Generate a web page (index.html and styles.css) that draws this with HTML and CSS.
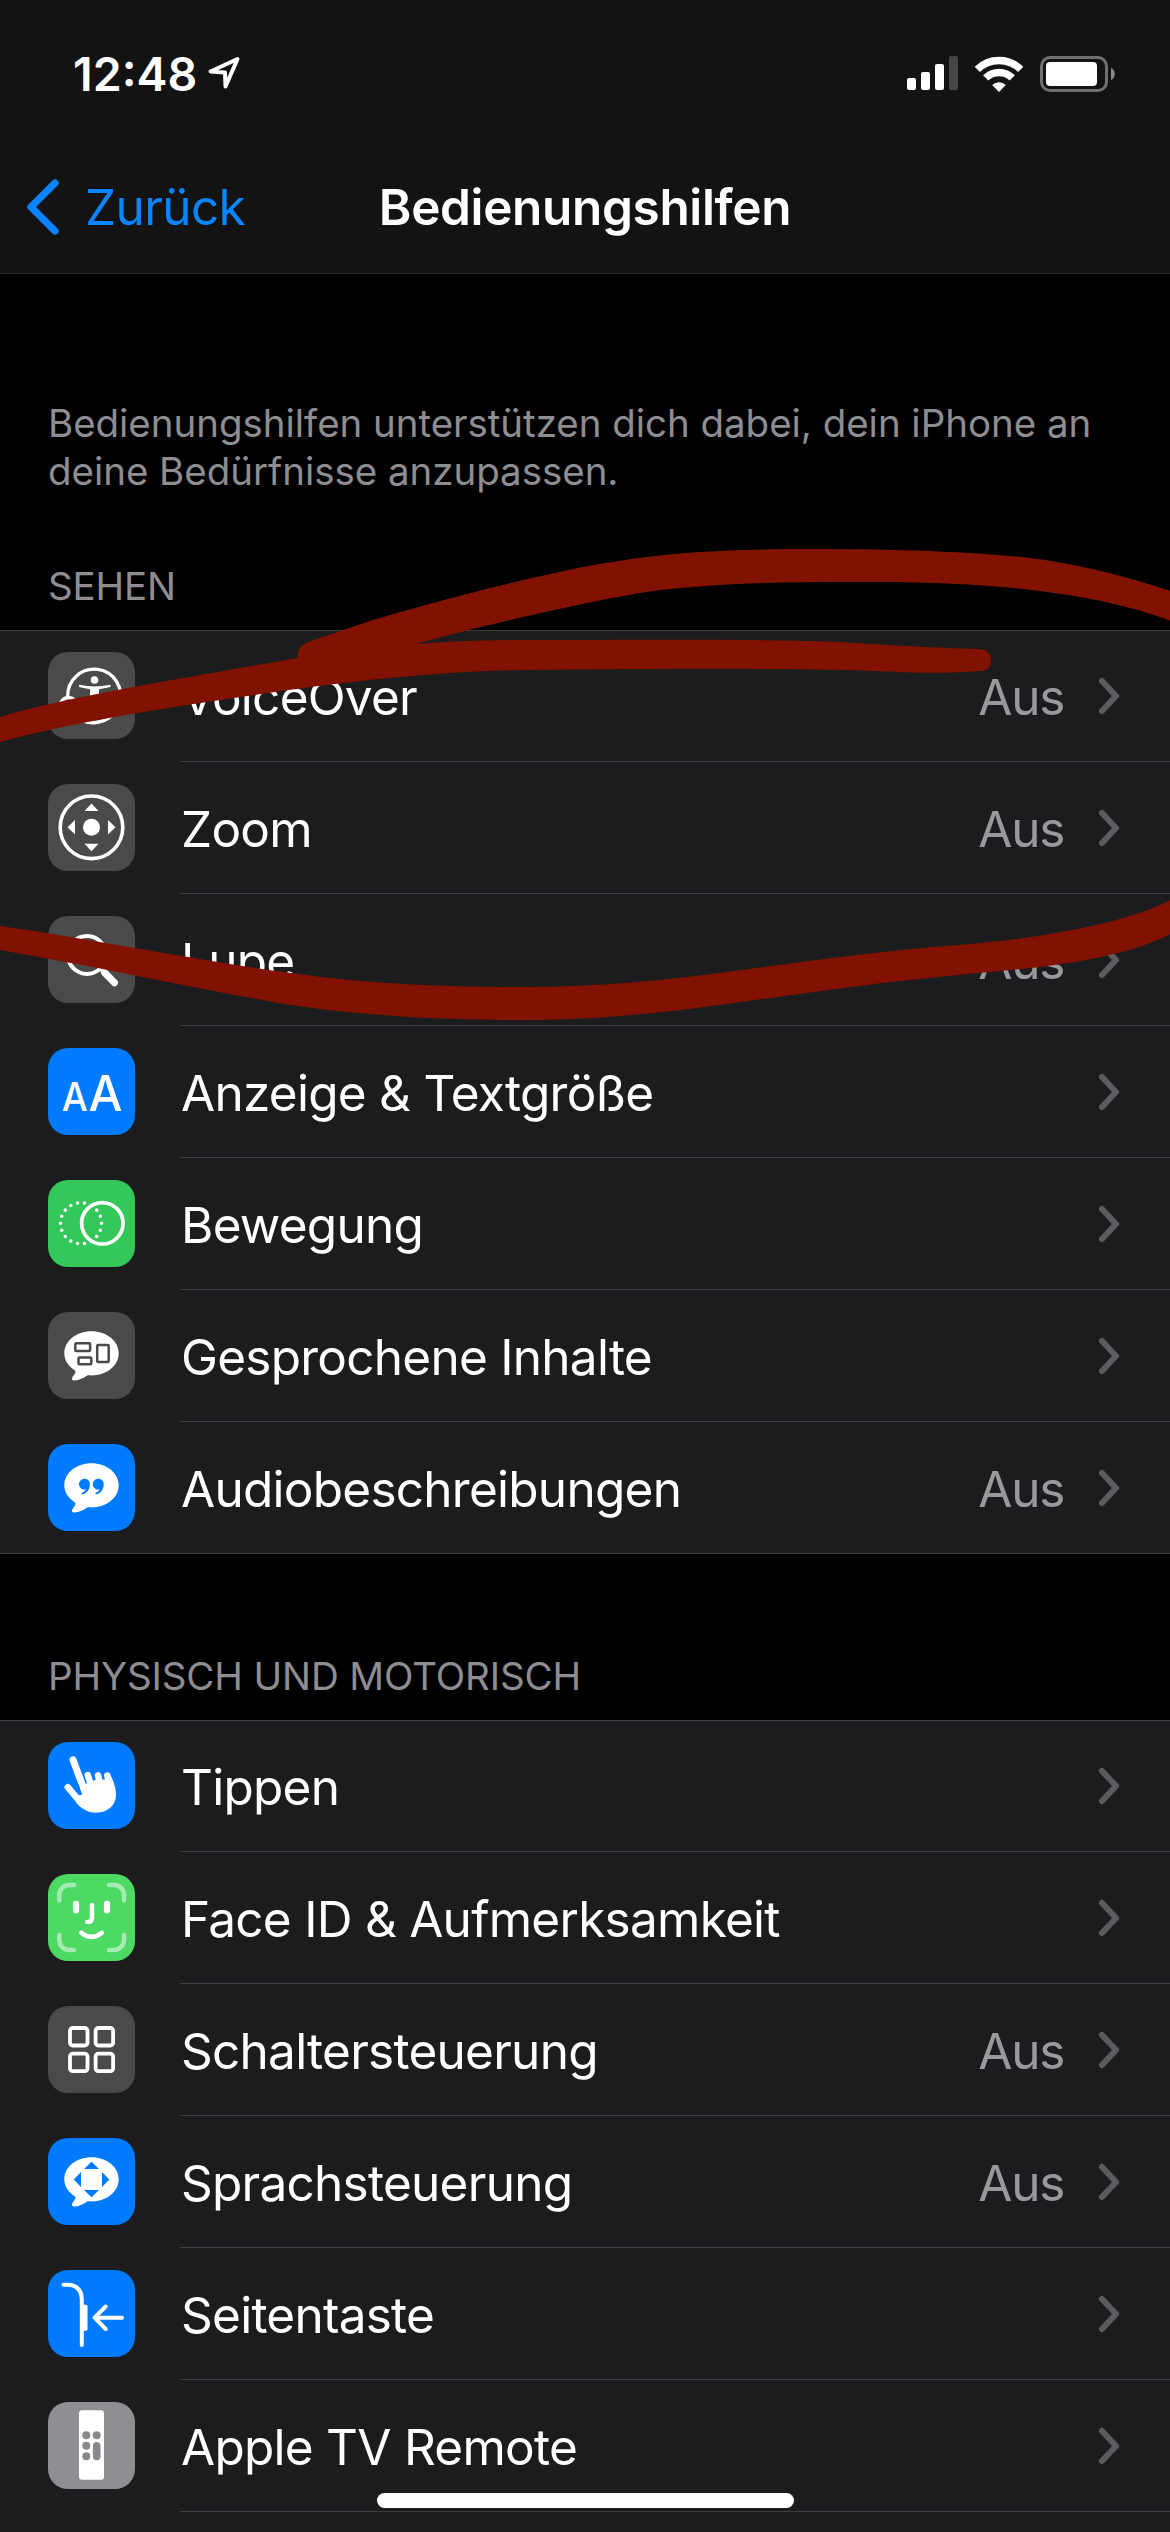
FILE: index.html
```html
<!DOCTYPE html>
<html lang="de">
<head>
<meta charset="utf-8">
<title>Bedienungshilfen</title>
<link rel="stylesheet" href="styles.css">
</head>
<body>
<svg class="defs" width="0" height="0" aria-hidden="true">
  <symbol id="chevron" viewBox="0 0 22 38"><path d="M4 4 18 19 4 34" fill="none" stroke="#5b5b60" stroke-width="6" stroke-linecap="round" stroke-linejoin="round"/></symbol>
  <symbol id="bubble" viewBox="0 0 87 87"><path d="M43.5 19.2C28.5 19.2 16.300 28.800 16.300 41.300c0 6.700 3.700 12.600 9.900 16.600 1.800 1.200 1.500 2.200.5 3.800l-2.200 3.400c-1.300 2.100-.3 3.500 2 3.400 5-.3 9.200-2.400 12.300-4.700 1.200-.7 2.400-.4 4.700-.4 15 0 27.200-9.600 27.200-22.100S58.500 19.200 43.500 19.200z" fill="#fff"/></symbol>
</svg>
<div class="screen">
  <header class="header">
    <div class="status">
      <div class="clock">
        <span class="time">12:48</span>
        <svg class="location" width="34" height="34" viewBox="0 0 34 34"><path d="M30.500 3 3.500 15.500 18 16.500 18.500 30.500Z" fill="none" stroke="#fff" stroke-width="4" stroke-linejoin="round"/></svg>
      </div>
      <div class="indicators">
        <svg width="51" height="34" viewBox="0 0 51 34"><g fill="#fff"><rect y="22" width="9" height="12" rx="2"/><rect x="14" y="16" width="9" height="18" rx="2"/><rect x="28" y="8" width="9" height="26" rx="2"/></g><rect x="42" width="9" height="34" rx="2" fill="#464646"/></svg>
        <svg width="50" height="36" viewBox="0 0 50 36"><g fill="none" stroke="#fff" stroke-width="7.500"><path d="M3.300 13.400A31 31 0 0 1 46.700 13.400"/><path d="M11.700 21.900A19 19 0 0 1 38.300 21.900"/></g><path d="M25 36 18.200 28.900A9.800 9.800 0 0 1 31.800 28.900Z" fill="#fff"/></svg>
        <svg width="76" height="36" viewBox="0 0 76 36"><rect x="1.500" y="1.500" width="65" height="33" rx="8.500" fill="none" stroke="#707070" stroke-width="3"/><rect x="6" y="6" width="51" height="24" rx="4" fill="#fff"/><path d="M71 12c5 2 5 10 0 12z" fill="#8a8a8a"/></svg>
      </div>
    </div>
    <nav class="nav">
      <a class="back">
        <svg width="36" height="60" viewBox="0 0 36 60"><path d="M31 6 7 30 31 54" fill="none" stroke="#0a84ff" stroke-width="7.200" stroke-linecap="round" stroke-linejoin="round"/></svg>
        <span>Zurück</span>
      </a>
      <h1 class="title">Bedienungshilfen</h1>
      <span></span>
    </nav>
  </header>

  <p class="intro">Bedienungshilfen unterstützen dich dabei, dein iPhone an<br>deine Bedürfnisse anzupassen.</p>

  <h2 class="heading heading-first">SEHEN</h2>
  <ul class="list">
    <li class="row">
      <svg class="icon gray" viewBox="0 0 87 87"><g fill="none" stroke="#fff" stroke-width="3.300"><path d="M19.700 44.500a26.500 26.500 0 1 1 14 22.500"/><circle cx="20.500" cy="54" r="8.500" fill="#4a4a4a"/></g><g fill="#fff"><path d="M34 67a26.500 26.500 0 0 0 28-4l2 2.500a30 30 0 0 1-32 4z"/><circle cx="46.500" cy="28" r="3.800"/><path d="M32 32.800c9 2.300 20 2.300 29.500 0 1.500 0 1.500 2 0 2.500l-10.500 2V48l3 13-3 1-4-13h-1l-4 13-3-1 3-13V37.300l-10-2c-1.500-.5-1.500-2.500 0-2.500z"/></g></svg>
      <div class="body"><span class="label">VoiceOver</span><span class="value">Aus</span><svg class="chevron"><use href="#chevron"/></svg></div>
    </li>
    <li class="row">
      <svg class="icon gray" viewBox="0 0 87 87"><circle cx="43.500" cy="43.300" r="31.300" fill="none" stroke="#fff" stroke-width="3.600"/><g fill="#fff"><circle cx="43.500" cy="43.300" r="8.500"/><path d="M43.500 19.500 50.500 27h-14zM43.500 67.300 50.500 59.800h-14zM19.500 43.300 27 36v14.600zM67.500 43.300 60 36v14.600z"/></g></svg>
      <div class="body"><span class="label">Zoom</span><span class="value">Aus</span><svg class="chevron"><use href="#chevron"/></svg></div>
    </li>
    <li class="row">
      <svg class="icon gray" viewBox="0 0 87 87"><g fill="none" stroke="#fff" stroke-linecap="round"><circle cx="39" cy="39" r="19" stroke-width="4"/><path d="M53 53 57 57" stroke-width="4"/><path d="M56.500 56.500 66.500 66.700" stroke-width="7"/></g></svg>
      <div class="body"><span class="label">Lupe</span><span class="value">Aus</span><svg class="chevron"><use href="#chevron"/></svg></div>
    </li>
    <li class="row">
      <svg class="icon blue" viewBox="0 0 87 87"><g class="letters"><text class="letter-small" x="26.700" y="62.500" textLength="26" lengthAdjust="spacingAndGlyphs">A</text><text class="letter-large" x="57.400" y="62.500" textLength="34" lengthAdjust="spacingAndGlyphs">A</text></g></svg>
      <div class="body"><span class="label">Anzeige &amp; Textgröße</span><svg class="chevron"><use href="#chevron"/></svg></div>
    </li>
    <li class="row">
      <svg class="icon green" viewBox="0 0 87 87"><g fill="none" stroke="#fff"><circle cx="33" cy="43.300" r="20.500" stroke-width="3.600" stroke-linecap="round" pathLength="18" stroke-dasharray="0 1"/><circle cx="54.300" cy="43.300" r="20.700" stroke-width="3.700"/></g></svg>
      <div class="body"><span class="label">Bewegung</span><svg class="chevron"><use href="#chevron"/></svg></div>
    </li>
    <li class="row">
      <svg class="icon gray" viewBox="0 0 87 87"><use href="#bubble"/><g fill="none" stroke="#4a4a4a" stroke-width="2.500"><rect x="27.300" y="31.300" width="14.800" height="7.800" rx="1"/><rect x="30.500" y="45.500" width="12.800" height="6.700" rx="1"/><rect x="49.200" y="33" width="11.500" height="17" rx="1"/></g></svg>
      <div class="body"><span class="label">Gesprochene Inhalte</span><svg class="chevron"><use href="#chevron"/></svg></div>
    </li>
    <li class="row row-last">
      <svg class="icon blue" viewBox="0 0 87 87"><use href="#bubble"/><g fill="#007aff"><path id="tick" d="M36.300 34.800a5.400 5.400 0 1 0 1.500 10.600c-.6 1.300-1.800 2.400-3.500 3.100-1.300.6-.8 2 .6 1.700 4.300-1 7-5 7-9.900 0-3.300-2.400-5.500-5.600-5.500z"/><use href="#tick" x="13.800"/></g></svg>
      <div class="body"><span class="label">Audiobeschreibungen</span><span class="value">Aus</span><svg class="chevron"><use href="#chevron"/></svg></div>
    </li>
  </ul>

  <h2 class="heading heading-next">PHYSISCH UND MOTORISCH</h2>
  <ul class="list">
    <li class="row">
      <svg class="icon blue" viewBox="0 0 87 87"><g fill="none" stroke="#fff" stroke-linecap="round" stroke-width="6.500"><path d="M25 17.800 37 50" stroke-width="7"/><path d="M19.800 45.200 34 62"/><path d="M39.700 33 44 46M50 33.300 53 46M59.300 33.500 63 46"/></g><path d="M33.800 53 38 41.500 47 38 56.500 37.500 62 32.500C65.800 39 68 46 68 53 68 63.500 59.500 70.700 48 70.700 39.500 70.700 33 66.500 28 60.200L24 53Z" fill="#fff"/><path d="M27.500 46 33.200 53.500 30.800 42z" fill="#007aff"/></svg>
      <div class="body"><span class="label">Tippen</span><svg class="chevron"><use href="#chevron"/></svg></div>
    </li>
    <li class="row">
      <svg class="icon lime" viewBox="0 0 87 87"><g fill="none" stroke="#fff" stroke-width="4.500" stroke-linecap="round"><path opacity=".5" d="M11.300 26.500V21a10 10 0 0 1 10-10H26M61 11h5a10 10 0 0 1 10 10v5.500M76 61v5a10 10 0 0 1-10 10h-5M26 76h-4.700a10 10 0 0 1-10-10v-5"/><path d="M28 30v6.300M59 30v6.300" stroke-width="6.300"/><path d="M44 31V43.500q0 4.500-4 4.500h-.7"/><path d="M33.300 58.700q10.200 8.300 20.600 0"/></g></svg>
      <div class="body"><span class="label">Face ID &amp; Aufmerksamkeit</span><svg class="chevron"><use href="#chevron"/></svg></div>
    </li>
    <li class="row">
      <svg class="icon gray" viewBox="0 0 87 87"><g fill="none" stroke="#fff" stroke-width="3.800"><rect x="22" y="22" width="17.500" height="17.500" rx="2.800"/><rect x="47.600" y="22" width="17.500" height="17.500" rx="2.800"/><rect x="22" y="47.700" width="17.500" height="17.500" rx="2.800"/><rect x="47.600" y="47.700" width="17.500" height="17.500" rx="2.800"/></g></svg>
      <div class="body"><span class="label">Schaltersteuerung</span><span class="value">Aus</span><svg class="chevron"><use href="#chevron"/></svg></div>
    </li>
    <li class="row">
      <svg class="icon blue" viewBox="0 0 87 87"><use href="#bubble"/><path d="M43.500 23.700 51 31H36zM43.500 59.300 51 52H36zM25.700 41.500 33 34v15zM61.300 41.500 54 34v15z" fill="#007aff"/></svg>
      <div class="body"><span class="label">Sprachsteuerung</span><span class="value">Aus</span><svg class="chevron"><use href="#chevron"/></svg></div>
    </li>
    <li class="row">
      <svg class="icon blue" viewBox="0 0 87 87"><g fill="none" stroke="#fff" stroke-width="4" stroke-linecap="round" stroke-linejoin="round"><path d="M15.500 14.700H20Q33.800 15.500 33.800 30V75"/><path d="M74 47.700H46.700M57.700 36.500 46.500 47.700 57.700 59"/></g><rect x="33" y="34.700" width="6.500" height="26" rx="1.500" fill="#fff"/></svg>
      <div class="body"><span class="label">Seitentaste</span><svg class="chevron"><use href="#chevron"/></svg></div>
    </li>
    <li class="row">
      <svg class="icon silver" viewBox="0 0 87 87"><rect x="31" y="8.300" width="25" height="69.500" rx="3" fill="#fff"/><g fill="#88888d"><circle cx="38.300" cy="33.300" r="4"/><circle cx="48.700" cy="33.300" r="4"/><circle cx="38.300" cy="43.800" r="4"/><circle cx="38.300" cy="54.300" r="4"/><rect x="44.900" y="39.900" width="7.600" height="18.300" rx="3.800"/></g></svg>
      <div class="body"><span class="label">Apple TV Remote</span><svg class="chevron"><use href="#chevron"/></svg></div>
    </li>
    <li class="row"></li>
  </ul>

  <svg class="marker" width="1170" height="2532" viewBox="0 0 1170 2532" fill="#821200">
    <path d="M298 656C297 647 304 643 317 639L373 620C440 600 550 571 619 561 670 552 740 549 806 549 880 549 970 551 1030 558 1085 565 1130 578 1171 591V621C1130 605 1075 594 1014 588 950 582 900 582 846 582 780 582 720 583 660 590 600 598 480 626 416 644L330 678 305 672C300 667 298 662 298 656Z"/>
    <path d="M0 717C60 698 200 675 298 658 370 647 440 640 522 640 620 640 740 639 809 641 860 642 880 646 980 649 995 650 995 671 980 671 930 675 890 671 846 670 760 668 650 669 522 670 420 672 330 684 261 694 180 706 80 720 0 742Z"/>
    <path d="M0 926C80 937 200 961 298 974 370 984 450 987 522 987 600 987 670 980 734 971 810 961 880 951 958 945 1030 939 1120 926 1171 900V934C1110 964 1020 969 958 975 880 982 800 994 734 1003 670 1012 600 1020 522 1020 440 1020 370 1016 298 1006 200 990 100 967 0 950Z"/>
  </svg>
  <div class="home-bar"></div>
</div>
</body>
</html>
```
FILE: styles.css
```css
* { box-sizing: border-box; margin: 0; padding: 0; }
html, body { background: #000; }
body { font-family: Inter, "Liberation Sans", sans-serif; color: #fff; }
svg { display: block; flex: none; }
.defs { position: absolute; }
.screen { position: relative; width: 1170px; height: 2532px; overflow: hidden; background: #000; }

.header { height: 274px; background: #131313; border-bottom: 1px solid #272727; }
.status { height: 141px; display: flex; justify-content: space-between; padding: 0 54px 0 73px; }
.clock { display: flex; padding-top: 46px; gap: 9px; }
.time { width: 125px; font-size: 46.5px; font-weight: 600; line-height: 56px; letter-spacing: 0; white-space: nowrap; }
.location { margin-top: 10px; }
.indicators { display: flex; gap: 16px; padding-top: 56px; }
.nav { height: 132px; display: grid; grid-template-columns: 360px 450px 360px; align-items: center; }
.back { display: flex; align-items: center; gap: 25px; padding-left: 24px; color: #0a84ff; font-size: 49.5px; line-height: 60px; letter-spacing: -0.6px; }
.title { text-align: center; font-size: 49.5px; line-height: 60px; font-weight: 600; letter-spacing: -0.35px; white-space: nowrap; }

.intro { padding: 125px 48px 0; font-size: 38.5px; line-height: 48px; letter-spacing: -0.04px; color: #8d8d92; white-space: nowrap; }
.heading { padding-left: 48px; font-size: 38.5px; line-height: 48px; font-weight: 400; letter-spacing: -0.12px; color: #8d8d92; white-space: nowrap; }
.heading-first { margin-top: 67px; height: 68px; }
.heading-next { height: 166px; padding-top: 98px; }

.list { list-style: none; background: #1c1c1e; box-shadow: inset 0 1px #3d3d41, inset 0 -1px #3d3d41; }
.row { height: 132px; display: flex; padding-left: 48px; gap: 45px; }
.icon { width: 87px; height: 87px; margin-top: 22px; border-radius: 20px; }
.body { flex: 1; display: flex; align-items: center; border-bottom: 1px solid #3d3d41; padding-right: 50px; }
.row-last .body { border-bottom-color: transparent; }
.label { flex: 1; padding: 2px 0 0 1px; font-size: 49.5px; line-height: 60px; letter-spacing: -0.74px; white-space: nowrap; }
.value { padding-top: 2px; margin-right: 34px; font-size: 49.5px; line-height: 60px; letter-spacing: -1.3px; color: #98989f; }
.chevron { width: 22px; height: 38px; }

.gray { background: #4a4a4a; }
.blue { background: #007aff; }
.green { background: #34c759; }
.lime { background: #4cd964; }
.silver { background: #8e8e93; }
.letters { fill: #fff; font-family: Inter, sans-serif; text-anchor: middle; }
.letter-small { font-size: 40px; font-weight: 500; }
.letter-large { font-size: 50px; font-weight: 450; }

.marker { position: absolute; left: 0; top: 0; }
.home-bar { position: absolute; left: 377px; top: 2493px; width: 417px; height: 15px; border-radius: 8px; background: #fff; }
```
